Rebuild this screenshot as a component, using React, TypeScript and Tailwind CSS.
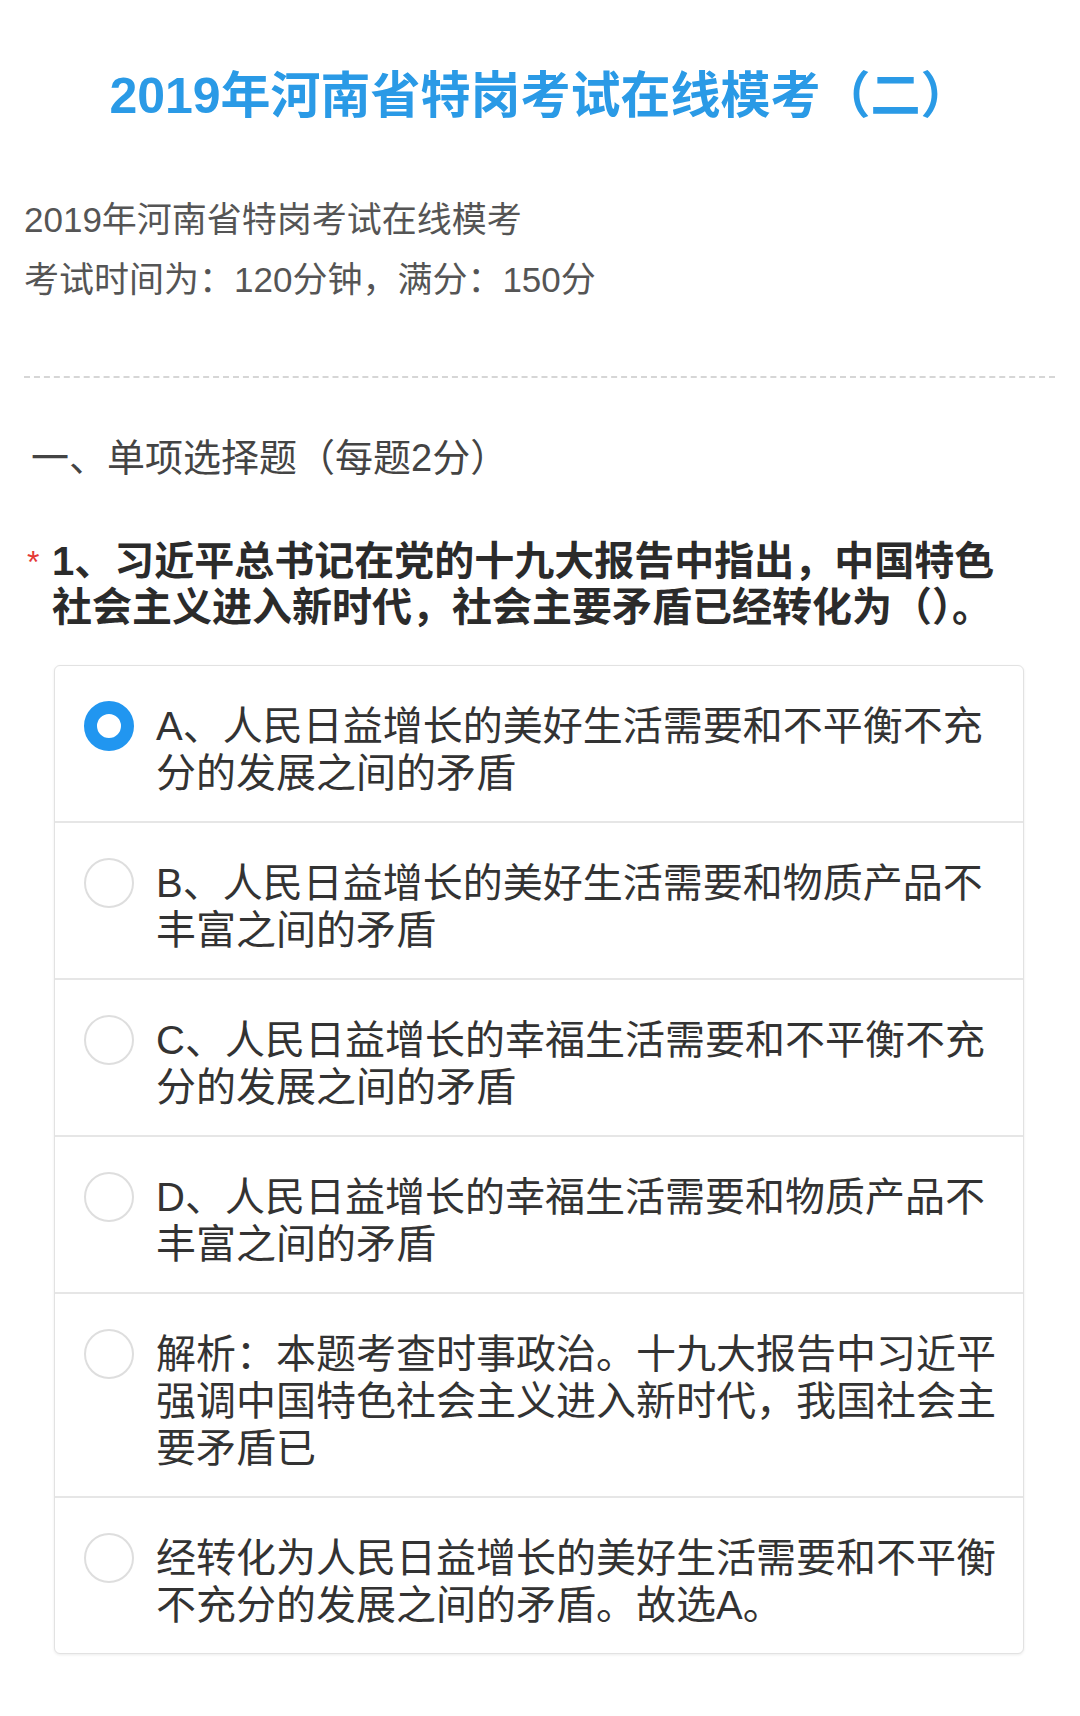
import React from "react";

type Option = {
  text: string;
  checked?: boolean;
};

const options: Option[] = [
  { text: "A、人民日益增长的美好生活需要和不平衡不充分的发展之间的矛盾", checked: true },
  { text: "B、人民日益增长的美好生活需要和物质产品不丰富之间的矛盾" },
  { text: "C、人民日益增长的幸福生活需要和不平衡不充分的发展之间的矛盾" },
  { text: "D、人民日益增长的幸福生活需要和物质产品不丰富之间的矛盾" },
  { text: "解析：本题考查时事政治。十九大报告中习近平强调中国特色社会主义进入新时代，我国社会主要矛盾已" },
  { text: "经转化为人民日益增长的美好生活需要和不平衡不充分的发展之间的矛盾。故选A。" },
];

function Radio({ checked }: { checked?: boolean }) {
  if (checked) {
    return (
      <span className="block shrink-0 w-[50px] h-[50px] rounded-full border-[13px] border-[#2196f0] bg-white" />
    );
  }
  return (
    <span className="block shrink-0 w-[50px] h-[50px] rounded-full border-2 border-[#dedede] bg-white" />
  );
}

export default function App() {
  return (
    <div className="w-[1080px] min-h-[1716px] bg-white font-['Liberation_Sans','Noto_Sans_CJK_SC',sans-serif] pb-[62px]">
      {/* Header title */}
      <h1 className="pt-[65px] text-center text-[50px] leading-[62px] font-bold text-[#2a9ae6]">
        2019年河南省特岗考试在线模考（二）
      </h1>

      {/* Exam description */}
      <div className="mt-[63px] px-[24px] text-[35px] leading-[60px] text-[#555555]">
        <p>2019年河南省特岗考试在线模考</p>
        <p>考试时间为：120分钟，满分：150分</p>
      </div>

      <div className="mt-[66px] ml-[24px] mr-[25px] border-t-2 border-dashed border-[#d6d6d6]" />

      {/* Section label */}
      <h2 className="mt-[55px] pl-[31px] text-[38px] leading-[50px] text-[#444444]">
        一、单项选择题（每题2分）
      </h2>

      {/* Question */}
      <div className="mt-[55px] flex pl-[27px] pr-[50px]">
        <span className="w-[25px] shrink-0 pt-[4px] text-[32px] leading-[40px] text-[#e53935]">*</span>
        <p className="text-[40px] leading-[46px] font-bold text-[#2b2b2b]">
          1、习近平总书记在党的十九大报告中指出，中国特色社会主义进入新时代，社会主要矛盾已经转化为（）。
        </p>
      </div>

      {/* Options card */}
      <div className="mt-[35px] ml-[54px] mr-[56px] border border-[#e2e2e2] rounded-[6px] shadow-[0_1px_3px_rgba(0,0,0,0.08)] bg-white">
        {options.map((opt, i) => (
          <div
            key={i}
            className={`flex items-start pl-[29px] pr-[20px] pt-[37px] pb-[24px] ${
              i < options.length - 1 ? "border-b-2 border-[#e6e6e6]" : ""
            }`}
          >
            <div className="-mt-[2px]">
              <Radio checked={opt.checked} />
            </div>
            <p className="ml-[22px] text-[40px] leading-[47px] text-[#333333]">{opt.text}</p>
          </div>
        ))}
      </div>
    </div>
  );
}
